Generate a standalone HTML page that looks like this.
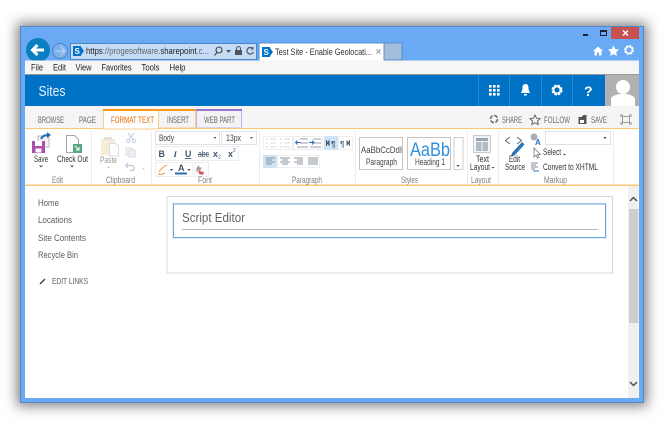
<!DOCTYPE html>
<html><head><meta charset="utf-8"><style>
html,body{margin:0;padding:0;width:664px;height:428px;overflow:hidden;background:#fff}
#w{position:absolute;left:20px;top:26px;width:624px;height:377px;box-sizing:border-box;background:#6aaaf4;border:1px solid #5487c4;box-shadow:0 0 12px 3px rgba(0,0,0,.5)}
#c{position:absolute;left:25px;top:106px;width:614px;height:292px;background:#fff}
svg{position:absolute;left:0;top:0}
#b{filter:blur(.35px)}
text{font-family:"Liberation Sans",sans-serif;font-size:8.800px;fill:#444}
</style></head><body>
<div id="w"></div>
<div id="c"></div>
<svg id="b" width="664" height="428" viewBox="0 0 664 428" xmlns="http://www.w3.org/2000/svg">
<rect x="611" y="27" width="28" height="12" fill="#c75050"/>
<path d="M623 30.500l5 5M628 30.500l-5 5" stroke="#fff" stroke-width="1.400"/>
<rect x="583" y="34" width="5" height="2" fill="#223"/>
<rect x="600.500" y="30.500" width="6" height="5" fill="none" stroke="#223"/><rect x="600" y="30" width="7" height="2" fill="#223"/>
<!-- back/forward -->
<circle cx="38" cy="50" r="12" fill="#0a7ebf"/>
<path d="M44 50H33M37.500 45l-5 5 5 5" fill="none" stroke="#fff" stroke-width="3"/>
<circle cx="60" cy="51" r="7.500" fill="#7fb2ea" stroke="#4a86c4"/>
<path d="M65 51H56M61 47l4 4-4 4" fill="none" stroke="#b8d4f2" stroke-width="1.200"/>
<!-- address bar -->
<rect x="70.500" y="43.500" width="186" height="16" fill="#c4dcf6" stroke="#4a86c4"/>
<rect x="73" y="46" width="8" height="10" fill="#0072c6"/><path d="M81 47l3 4-3 4z" fill="#0072c6"/>
<text x="74.500" y="54" style="fill:#fff;font-weight:bold;font-size:8px">S</text>
<text x="86" y="54" textLength="123" lengthAdjust="spacingAndGlyphs" style="font-size:9px;fill:#666"><tspan fill="#222">https</tspan>://progesoftware.<tspan fill="#222">sharepoint</tspan>.c...</text>
<circle cx="219" cy="50" r="3" fill="none" stroke="#444" stroke-width="1.100"/><path d="M217 52.500l-2.500 3" stroke="#444" stroke-width="1.200"/>
<path d="M226 50h5l-2.500 3z" fill="#555"/>
<rect x="235" y="50" width="7" height="5" fill="#555"/><path d="M236.500 50v-1.500a2 2 0 0 1 4 0v1.500" fill="none" stroke="#555"/>
<path d="M253 49a3.300 3.300 0 1 0 .3 3" fill="none" stroke="#555" stroke-width="1.200"/><path d="M253.500 46.500v3h-3z" fill="#555"/>
<!-- tabs -->
<rect x="259" y="43" width="143" height="17" fill="#a3bddd" stroke="#5b8fcc"/>
<rect x="259" y="43" width="125" height="18" fill="#fff" stroke="#5b8fcc"/>
<rect x="262" y="47" width="8" height="10" fill="#0072c6"/><path d="M270 48l3 4-3 4z" fill="#0072c6"/>
<text x="263.500" y="55" style="fill:#fff;font-weight:bold;font-size:8px">S</text>
<text x="275" y="55" textLength="97" lengthAdjust="spacingAndGlyphs" style="font-size:9px;fill:#333">Test Site - Enable Geolocati...</text>
<path d="M376.500 49.500l4 4M380.500 49.500l-4 4" stroke="#999"/>
<!-- toolbar icons -->
<path d="M598 46.500l-5 4.500h1.500v4.500h2.500v-3h2v3h2.500V51h1.500z" fill="#fff"/>
<path d="M613.500 45.500l1.700 3.500 3.800.5-2.800 2.600.7 3.800-3.400-1.800-3.400 1.800.7-3.800-2.800-2.600 3.800-.5z" fill="#fff"/>
<circle cx="629" cy="50" r="3.700" fill="none" stroke="#fff" stroke-width="2.400" stroke-dasharray="2 .9"/><circle cx="629" cy="50" r="3.500" fill="none" stroke="#fff" stroke-width="1"/>
<!-- menu -->
<rect x="25" y="60.500" width="614" height="14" fill="#f6f6f6"/>
<rect x="25" y="74" width="614" height="1" fill="#999"/>
<text x="31" y="70.500" textLength="12" lengthAdjust="spacingAndGlyphs" style="font-size:9px;fill:#222">File</text>
<text x="53" y="70.500" textLength="13" lengthAdjust="spacingAndGlyphs" style="font-size:9px;fill:#222">Edit</text>
<text x="75.500" y="70.500" textLength="16" lengthAdjust="spacingAndGlyphs" style="font-size:9px;fill:#222">View</text>
<text x="101.500" y="70.500" textLength="30" lengthAdjust="spacingAndGlyphs" style="font-size:9px;fill:#222">Favorites</text>
<text x="141.500" y="70.500" textLength="18" lengthAdjust="spacingAndGlyphs" style="font-size:9px;fill:#222">Tools</text>
<text x="169.500" y="70.500" textLength="16" lengthAdjust="spacingAndGlyphs" style="font-size:9px;fill:#222">Help</text>
<!-- suite bar -->
<rect x="25" y="75" width="614" height="31" fill="#0072c6"/>
<text x="38.500" y="96" textLength="27" lengthAdjust="spacingAndGlyphs" style="font-size:14.500px;fill:#e6f2fb">Sites</text>
<path d="M478.500 75v31M509.500 75v31M541.500 75v31M572.500 75v31" stroke="#2b8ad1"/>
<g fill="#fff"><rect x="489" y="85" width="2.600" height="2.600"/><rect x="493" y="85" width="2.600" height="2.600"/><rect x="497" y="85" width="2.600" height="2.600"/><rect x="489" y="89" width="2.600" height="2.600"/><rect x="493" y="89" width="2.600" height="2.600"/><rect x="497" y="89" width="2.600" height="2.600"/><rect x="489" y="93" width="2.600" height="2.600"/><rect x="493" y="93" width="2.600" height="2.600"/><rect x="497" y="93" width="2.600" height="2.600"/></g>
<path d="M525.500 84c-2.500 0-3 2-3 4 0 3-1.500 4-1.500 5h9c0-1-1.500-2-1.500-5 0-2-.5-4-3-4z" fill="#fff"/><rect x="524" y="94" width="3" height="1.500" fill="#fff"/>
<circle cx="557" cy="90" r="4" fill="none" stroke="#fff" stroke-width="3" stroke-dasharray="2.200 1"/><circle cx="557" cy="90" r="3.600" fill="none" stroke="#fff" stroke-width="1.600"/>
<text x="584" y="96" style="font-size:14px;font-weight:bold;fill:#fff">?</text>
<rect x="605" y="75" width="34" height="31" fill="#b1b1b1"/>
<circle cx="623" cy="87" r="7" fill="#fff"/><path d="M611 106v-7c0-3 5-4 8-5h8c3 1 8 2 8 5v7z" fill="#fff"/>
<!-- ribbon -->
<rect x="25" y="106" width="614" height="22" fill="#f5f5f5"/>
<rect x="103.500" y="110" width="55" height="19" fill="#fff" stroke="#f7cf8e"/>
<rect x="158.500" y="110" width="37" height="18" fill="#f3f3f3" stroke="#f7cf8e"/>
<rect x="196.500" y="110" width="45" height="18" fill="#f3f3f3" stroke="#c4b4e6"/>
<rect x="103" y="109" width="92.500" height="2" fill="#f99b1c"/>
<rect x="196" y="109" width="46" height="2" fill="#9673d3"/>
<rect x="25" y="128" width="79" height="1" fill="#fbc770"/><rect x="158" y="128" width="481" height="1" fill="#fbc770"/>
<text x="38" y="123" textLength="26" lengthAdjust="spacingAndGlyphs" style="font-size:8.800px;fill:#6a6a6a">BROWSE</text>
<text x="79" y="123" textLength="17" lengthAdjust="spacingAndGlyphs" style="font-size:8.800px;fill:#6a6a6a">PAGE</text>
<text x="111" y="123" textLength="43" lengthAdjust="spacingAndGlyphs" style="font-size:8.800px;fill:#e66a00">FORMAT TEXT</text>
<text x="167" y="123" textLength="22" lengthAdjust="spacingAndGlyphs" style="font-size:8.800px;fill:#6a6a6a">INSERT</text>
<text x="204" y="123" textLength="31" lengthAdjust="spacingAndGlyphs" style="font-size:8.800px;fill:#6a6a6a">WEB PART</text>
<!-- share/follow/save -->
<circle cx="494" cy="119" r="3.500" fill="none" stroke="#666" stroke-width="1.500" stroke-dasharray="4 1.500"/>
<text x="502" y="123" textLength="20" lengthAdjust="spacingAndGlyphs" style="fill:#6a6a6a">SHARE</text>
<path d="M535 115l1.500 3.200 3.500.4-2.500 2.400.7 3.500-3.200-1.700-3.200 1.700.7-3.500-2.500-2.400 3.500-.4z" fill="none" stroke="#666"/>
<text x="544" y="123" textLength="26" lengthAdjust="spacingAndGlyphs" style="fill:#6a6a6a">FOLLOW</text>
<path d="M578.500 124v-7h3l2-2h3v9z" fill="#555"/><rect x="580" y="120" width="4" height="3" fill="#fff"/>
<text x="591" y="123" textLength="16" lengthAdjust="spacingAndGlyphs" style="fill:#6a6a6a">SAVE</text>
<path d="M621 117v-2h2M629 115h2v2M631 122v2h-2M623 124h-2v-2" fill="none" stroke="#888"/><rect x="622.500" y="116.500" width="7" height="6" fill="none" stroke="#999"/>
<!-- ribbon dividers -->
<g stroke="#ececec"><path d="M91.500 131v54M151.500 131v54M259.500 131v54M355.500 131v54M467.500 131v54M498.500 131v54M613.500 131v54"/></g>
<rect x="25" y="184.500" width="614" height="1.500" fill="#fbc770"/>
<!-- Save -->
<rect x="38" y="136" width="11" height="11" fill="#f2f2f2" stroke="#bbb"/>
<path d="M41 139c2-4 5-4 8-4" fill="none" stroke="#2a6db5" stroke-width="2"/><path d="M47 132l4 3-4 3z" fill="#2a6db5"/>
<rect x="32" y="141" width="13" height="12" fill="#a94fb0"/><rect x="35" y="141" width="7" height="5" fill="#fff"/><rect x="35.500" y="148.500" width="6" height="4" fill="#fff"/>
<text x="34" y="162" textLength="14" lengthAdjust="spacingAndGlyphs" style="fill:#333">Save</text>
<path d="M39 165.500h4l-2 2z" fill="#555"/>
<text x="52" y="183" textLength="11" lengthAdjust="spacingAndGlyphs" style="fill:#808080">Edit</text>
<!-- Check out -->
<path d="M66.500 135.500h8l4 4v13h-12z" fill="#fff" stroke="#a5a5a5"/>
<rect x="73" y="144" width="9" height="9" fill="#5aa582"/><path d="M75 146l4 4M79 147v3h-3" stroke="#fff" fill="none"/>
<text x="57" y="162" textLength="31" lengthAdjust="spacingAndGlyphs" style="fill:#333">Check Out</text>
<path d="M70 165.500h4l-2 2z" fill="#555"/>
<!-- Clipboard -->
<rect x="101" y="139" width="14" height="16" fill="#f6edd8"/><rect x="104" y="137" width="8" height="3" fill="#e5e0d5"/>
<path d="M109.500 143.500h6l3 3v9.500h-9z" fill="#fff" stroke="#ddd"/>
<text x="100" y="163" textLength="17" lengthAdjust="spacingAndGlyphs" style="fill:#999">Paste</text>
<path d="M107 167h3l-1.500 1.500z" fill="#bbb"/>
<text x="106" y="183" textLength="29" lengthAdjust="spacingAndGlyphs" style="fill:#808080">Clipboard</text>
<path d="M128 133l5 7M134 133l-5 7" stroke="#ccd5de" stroke-width="1.200"/><circle cx="128" cy="141" r="1.700" fill="none" stroke="#c3cfdb"/><circle cx="134" cy="141" r="1.700" fill="none" stroke="#c3cfdb"/>
<rect x="126" y="148" width="6" height="7" fill="#eef2f7" stroke="#d5dde6"/><rect x="129" y="150" width="6" height="7" fill="#eef2f7" stroke="#d5dde6"/>
<path d="M128 163l-2.500 2.500 2.500 2.500M127 165.500h5c3 0 3 5 0 5h-2" fill="none" stroke="#b5c9de" stroke-width="1.200"/>
<path d="M142 168h3l-1.500 1.500z" fill="#ccc"/>
<!-- Font -->
<rect x="155.500" y="131.500" width="64" height="13" fill="#fff" stroke="#e2e2e2"/>
<text x="159" y="141" textLength="15" lengthAdjust="spacingAndGlyphs" style="fill:#444">Body</text>
<path d="M213.500 137h3l-1.500 2z" fill="#555"/>
<rect x="221.500" y="131.500" width="35" height="13" fill="#fff" stroke="#e2e2e2"/>
<text x="226" y="141" textLength="15" lengthAdjust="spacingAndGlyphs" style="fill:#444">13px</text>
<path d="M250 137h3l-1.500 2z" fill="#555"/>
<rect x="155.500" y="146.500" width="83" height="14" fill="#fff" stroke="#ececec"/>
<text x="158.500" y="157" style="font-weight:bold;fill:#3f556b">B</text>
<text x="173.500" y="157" style="font-style:italic;font-weight:bold;fill:#3f556b;font-family:'Liberation Serif',serif">I</text>
<text x="185" y="157" style="font-weight:bold;fill:#3f556b;text-decoration:underline">U</text>
<text x="198" y="157" textLength="11" lengthAdjust="spacingAndGlyphs" style="fill:#3f556b;text-decoration:line-through">abc</text>
<text x="213" y="157" style="font-weight:bold;fill:#3f556b">x</text><text x="218" y="158.500" style="font-size:5px;fill:#2a6db5">2</text>
<text x="228" y="157" style="font-weight:bold;fill:#3f556b">x</text><text x="233" y="152" style="font-size:5px;fill:#2a6db5">2</text>
<rect x="155.500" y="162.500" width="37" height="14" fill="#fff" stroke="#ececec"/>
<rect x="194.500" y="162.500" width="14" height="14" fill="#fff" stroke="#ececec"/>
<path d="M159 172c2-4 6-6 8-7M158 174c3 1 5 0 7-1" fill="none" stroke="#eba55a" stroke-width="1.200"/>
<path d="M170 169h3l-1.500 2z" fill="#444"/>
<text x="178" y="171" style="font-weight:bold;font-size:9px;fill:#3f556b">A</text>
<rect x="175" y="172.500" width="12" height="2" fill="#2a6db5"/>
<path d="M187.500 169h3l-1.500 2z" fill="#444"/>
<path d="M198 166l4 2-3 5-3-2z" fill="#c9a5a5"/><path d="M199 171l5 1-1 3-4-1z" fill="#d05a5a"/><text x="196" y="170" style="font-size:6px;fill:#888">A</text>
<text x="198" y="183" textLength="14" lengthAdjust="spacingAndGlyphs" style="fill:#808080">Font</text>
<!-- Paragraph -->
<rect x="263.500" y="136.500" width="29" height="13" fill="#fff" stroke="#f0f0f0"/>
<rect x="293.500" y="136.500" width="29" height="13" fill="#fff" stroke="#ececec"/>
<rect x="324" y="136" width="14" height="14" fill="#cfe3f5"/>
<rect x="338.500" y="136.500" width="14" height="13" fill="#fff" stroke="#f0f0f0"/>
<g stroke="#d2dbe3" fill="none"><path d="M266 139h2M270 139h6M266 143h2M270 143h6M266 147h2M270 147h6M280 139h2M284 139h6M280 143h2M284 143h6M280 147h2M284 147h6"/></g>
<g stroke="#98a2ad" fill="none"><path d="M300 139h8M300 143h8M297 147h11M313 139h8M313 143h8M310 147h11"/></g>
<path d="M295.500 142.500h5M297.500 140.500l-2 2 2 2M309 142.500h5M312 140.500l2 2-2 2" fill="none" stroke="#2a6db5"/>
<path d="M326.500 140v6M327 143l2-2v4z" stroke="#3d5a77" fill="#3d5a77"/><text x="331" y="147" style="font-size:8px;font-weight:bold;fill:#3d5a77">¶</text>
<text x="340" y="147" style="font-size:8px;font-weight:bold;fill:#5a6a7a">¶</text><path d="M349.500 140v6M349 143l-2-2v4z" stroke="#5a6a7a" fill="#5a6a7a"/>
<rect x="263" y="155" width="14" height="13" fill="#cfe3f5"/>
<rect x="277.500" y="155.500" width="42" height="12" fill="#fff" stroke="#f0f0f0"/>
<g stroke="#8a95a1" fill="none"><path d="M266 158h9M266 160h6M266 162h9M266 164h6M280 158h10M282 160h6M280 162h10M282 164h6M294 158h9M297 160h6M294 162h9M297 164h6M308 158h10M308 160h10M308 162h10M308 164h10"/></g>
<text x="292" y="183" textLength="30" lengthAdjust="spacingAndGlyphs" style="fill:#808080">Paragraph</text>
<!-- Styles -->
<rect x="359.500" y="137.500" width="43" height="32" fill="#fff" stroke="#c4c4c4"/>
<text x="361" y="153" textLength="41" lengthAdjust="spacingAndGlyphs" style="font-size:9.500px;fill:#444">AaBbCcDdI</text>
<text x="366" y="165" textLength="31" lengthAdjust="spacingAndGlyphs" style="fill:#444">Paragraph</text>
<rect x="407.500" y="137.500" width="43" height="32" fill="#fff" stroke="#c4c4c4"/>
<text x="410" y="156" textLength="40" lengthAdjust="spacingAndGlyphs" style="font-size:19px;fill:#2e90de">AaBb</text>
<text x="415" y="165" textLength="30" lengthAdjust="spacingAndGlyphs" style="fill:#444">Heading 1</text>
<rect x="454" y="137.500" width="9" height="32" fill="#fff" stroke="#ccc"/>
<path d="M456.500 165h3l-1.500 2z" fill="#444"/>
<text x="401" y="183" textLength="17" lengthAdjust="spacingAndGlyphs" style="fill:#808080">Styles</text>
<!-- Layout -->
<rect x="473.500" y="135.500" width="17" height="17" fill="#f4f4f4" stroke="#999" stroke-dasharray="1 1"/>
<rect x="476" y="138" width="12" height="3" fill="#9aa7b3"/><rect x="476" y="142" width="5.500" height="9" fill="#b0bbc5"/><rect x="482.500" y="142" width="5.500" height="9" fill="#b0bbc5"/>
<text x="476" y="162" textLength="13" lengthAdjust="spacingAndGlyphs" style="fill:#333">Text</text>
<text x="470" y="170" textLength="20" lengthAdjust="spacingAndGlyphs" style="fill:#333">Layout</text>
<path d="M491.500 167h3l-1.500 1.500z" fill="#444"/>
<text x="471" y="183" textLength="20" lengthAdjust="spacingAndGlyphs" style="fill:#808080">Layout</text>
<!-- Markup -->
<path d="M510 137l-4.500 3.500 4.500 3.500M517 137l4.500 3.500-4.500 3.500" fill="none" stroke="#666"/>
<path d="M512 153l10-11 2.500 2.500-10 11-3.500 1z" fill="#2a73b8"/>
<text x="509" y="162" textLength="11" lengthAdjust="spacingAndGlyphs" style="fill:#333">Edit</text>
<text x="505" y="170" textLength="20" lengthAdjust="spacingAndGlyphs" style="fill:#333">Source</text>
<circle cx="534" cy="137" r="3.500" fill="#a5afb9"/><text x="535" y="145" style="font-size:8px;font-weight:bold;fill:#2a73b8">A</text>
<rect x="545.500" y="131.500" width="65" height="13" fill="#fff" stroke="#e2e2e2"/>
<path d="M603.500 137h3l-1.500 2z" fill="#444"/>
<path d="M534 148v9l2-2 1.500 3 1.500-.7-1.500-2.800h3z" fill="#fff" stroke="#777" stroke-width=".8"/>
<text x="543" y="155" textLength="18" lengthAdjust="spacingAndGlyphs" style="fill:#333">Select</text>
<path d="M563 154h3l-1.500 1.500z" fill="#444"/>
<g stroke="#889" fill="none"><path d="M531 163h7M531 165h5M531 167h7M531 169h4"/></g><path d="M533 171h6" stroke="#2a73b8"/>
<text x="543" y="170" textLength="55" lengthAdjust="spacingAndGlyphs" style="fill:#333">Convert to XHTML</text>
<text x="544" y="183" textLength="23" lengthAdjust="spacingAndGlyphs" style="fill:#808080">Markup</text>
<!-- left nav -->
<text x="38" y="206" textLength="21" lengthAdjust="spacingAndGlyphs" style="font-size:9.200px;fill:#5c5c5c">Home</text>
<text x="38" y="223" textLength="34" lengthAdjust="spacingAndGlyphs" style="font-size:9.200px;fill:#5c5c5c">Locations</text>
<text x="38" y="241" textLength="48" lengthAdjust="spacingAndGlyphs" style="font-size:9.200px;fill:#5c5c5c">Site Contents</text>
<text x="38" y="258" textLength="40" lengthAdjust="spacingAndGlyphs" style="font-size:9.200px;fill:#5c5c5c">Recycle Bin</text>
<path d="M40 284l5-5" stroke="#444" stroke-width="1.500"/>
<text x="52" y="284" textLength="36" lengthAdjust="spacingAndGlyphs" style="font-size:8.500px;fill:#5c5c5c">EDIT LINKS</text>
<!-- web part -->
<rect x="167" y="196.500" width="445.500" height="76.500" fill="#fff" stroke="#d8d8d8"/>
<rect x="173.500" y="204" width="432" height="33.500" fill="#fff" stroke="#d9e8f6" stroke-width="2.500"/>
<rect x="173.500" y="204" width="432" height="33.500" fill="#fff" stroke="#6ea4d6"/>
<text x="182" y="222" textLength="63" lengthAdjust="spacingAndGlyphs" style="font-size:13px;fill:#666">Script Editor</text>
<rect x="182" y="229" width="416" height="1" fill="#b8b8b8"/>
<!-- scrollbar -->
<rect x="628" y="186" width="10.500" height="212" fill="#f0f0f0"/>
<rect x="629" y="209" width="9.500" height="114" fill="#cdcdcd"/>
<path d="M630 201l3.500-3.500 3.500 3.500M630 382l3.500 3.500 3.500-3.500" fill="none" stroke="#505050" stroke-width="1.500"/>
</svg>
</body></html>
